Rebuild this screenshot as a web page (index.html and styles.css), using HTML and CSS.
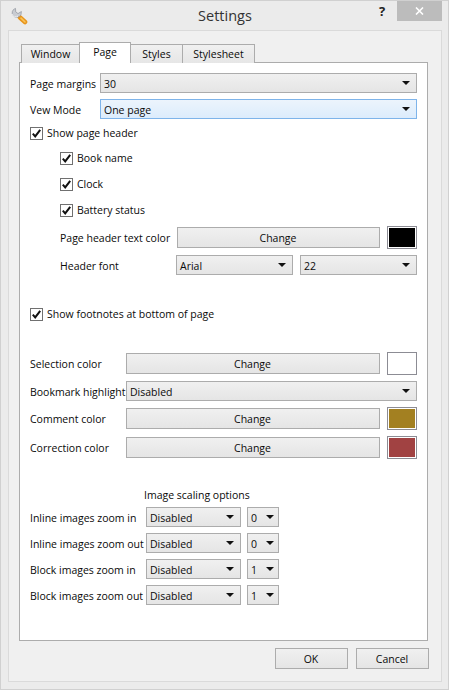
FILE: index.html
```html
<!DOCTYPE html>
<html lang="en">
<head>
<meta charset="utf-8">
<title>Settings</title>
<link rel="stylesheet" href="styles.css">
</head>
<body>
<div class="window">
  <header class="titlebar">
    <svg class="app-icon" width="18" height="18" viewBox="0 0 18 18">
      <path d="M10 10.5 L15 15" stroke="#e8951c" stroke-width="4.6" stroke-linecap="round"/>
      <path d="M11 11.2 L15 15" stroke="#f9c45a" stroke-width="1.6" stroke-linecap="round"/>
      <path d="M5.5 1.4 A4.6 4.6 0 1 0 11 7.6 L11.4 4.5 L8 6.6 L5.7 4.8 Z" fill="#c9ccd2" stroke="#8f949c" stroke-width=".7"/>
      <path d="M2.3 7.2 A3.4 3.4 0 0 0 8 9" fill="none" stroke="#f4f5f7" stroke-width="1"/>
    </svg>
    <div class="title">Settings</div>
    <div class="help">?</div>
    <div class="close">
      <svg width="9" height="8" viewBox="0 0 9 8"><path d="M1 .5 L8 7.5 M8 .5 L1 7.5" stroke="#fff" stroke-width="1.6"/></svg>
    </div>
  </header>
  <main class="frame">
    <nav class="tabs">
      <div class="tab tab-window">Window</div>
      <div class="tab tab-page active">Page</div>
      <div class="tab tab-styles">Styles</div>
      <div class="tab tab-sheet">Stylesheet</div>
    </nav>
    <section class="pane">
      <div class="row row-first">
        <label class="lbl lbl-top">Page margins</label>
        <div class="select grow"><span>30</span><i class="arrow"></i></div>
      </div>
      <div class="row row-view">
        <label class="lbl lbl-top">Vew Mode</label>
        <div class="select grow focus"><span>One page</span><i class="arrow"></i></div>
      </div>

      <div class="check check-main"><span class="box"><svg width="11" height="11" viewBox="0 0 11 11"><path d="M1.8 5.6 L4.2 8.4 L9.2 1.8" fill="none" stroke="#111" stroke-width="2"/></svg></span><span class="cap">Show page header</span></div>
      <div class="check check-sub first"><span class="box"><svg width="11" height="11" viewBox="0 0 11 11"><path d="M1.8 5.6 L4.2 8.4 L9.2 1.8" fill="none" stroke="#111" stroke-width="2"/></svg></span><span class="cap">Book name</span></div>
      <div class="check check-sub"><span class="box"><svg width="11" height="11" viewBox="0 0 11 11"><path d="M1.8 5.6 L4.2 8.4 L9.2 1.8" fill="none" stroke="#111" stroke-width="2"/></svg></span><span class="cap">Clock</span></div>
      <div class="check check-sub"><span class="box"><svg width="11" height="11" viewBox="0 0 11 11"><path d="M1.8 5.6 L4.2 8.4 L9.2 1.8" fill="none" stroke="#111" stroke-width="2"/></svg></span><span class="cap">Battery status</span></div>

      <div class="row color-row header-color">
        <label class="lbl lbl-sub">Page header text color</label>
        <div class="button grow">Change</div>
        <div class="swatch"><b class="black"></b></div>
      </div>
      <div class="row font-row">
        <label class="lbl lbl-font">Header font</label>
        <div class="select font-sel"><span>Arial</span><i class="arrow"></i></div>
        <div class="select font-sel"><span>22</span><i class="arrow"></i></div>
      </div>

      <div class="check check-main footnotes"><span class="box"><svg width="11" height="11" viewBox="0 0 11 11"><path d="M1.8 5.6 L4.2 8.4 L9.2 1.8" fill="none" stroke="#111" stroke-width="2"/></svg></span><span class="cap">Show footnotes at bottom of page</span></div>

      <div class="row color-row selection">
        <label class="lbl lbl-color">Selection color</label>
        <div class="button grow">Change</div>
        <div class="swatch"><b class="white"></b></div>
      </div>
      <div class="row bookmark">
        <label class="lbl lbl-color">Bookmark highlight</label>
        <div class="select grow"><span>Disabled</span><i class="arrow"></i></div>
      </div>
      <div class="row color-row comment">
        <label class="lbl lbl-color">Comment color</label>
        <div class="button grow">Change</div>
        <div class="swatch"><b class="gold"></b></div>
      </div>
      <div class="row color-row correction">
        <label class="lbl lbl-color">Correction color</label>
        <div class="button grow">Change</div>
        <div class="swatch"><b class="red"></b></div>
      </div>

      <div class="scaling-title">Image scaling options</div>
      <div class="row scale-row scale-first">
        <label class="lbl lbl-scale">Inline images zoom in</label>
        <div class="select sel-mode"><span>Disabled</span><i class="arrow"></i></div>
        <div class="select sel-num"><span>0</span><i class="arrow"></i></div>
      </div>
      <div class="row scale-row">
        <label class="lbl lbl-scale">Inline images zoom out</label>
        <div class="select sel-mode"><span>Disabled</span><i class="arrow"></i></div>
        <div class="select sel-num"><span>0</span><i class="arrow"></i></div>
      </div>
      <div class="row scale-row">
        <label class="lbl lbl-scale">Block images zoom in</label>
        <div class="select sel-mode"><span>Disabled</span><i class="arrow"></i></div>
        <div class="select sel-num"><span>1</span><i class="arrow"></i></div>
      </div>
      <div class="row scale-row">
        <label class="lbl lbl-scale">Block images zoom out</label>
        <div class="select sel-mode"><span>Disabled</span><i class="arrow"></i></div>
        <div class="select sel-num"><span>1</span><i class="arrow"></i></div>
      </div>
    </section>
    <footer class="actions">
      <div class="button action">OK</div>
      <div class="button action">Cancel</div>
    </footer>
  </main>
</div>
</body>
</html>
```
FILE: styles.css
```css
* { box-sizing: border-box; }
html, body { margin: 0; padding: 0; }
body {
  width: 449px;
  height: 690px;
  overflow: hidden;
  font-family: "Open Sans", "Noto Sans", sans-serif;
  font-size: 10.5px;
  color: #0a0a0a;
}
.window {
  width: 449px;
  height: 690px;
  background: #ebebeb;
  border: 1px solid #d0d0d0;
  display: flex;
  flex-direction: column;
  padding: 0 6px 7px 7px;
}
.titlebar {
  height: 29px;
  flex: none;
  display: flex;
  align-items: flex-start;
  position: relative;
}
.app-icon { margin: 6px 0 0 2px; flex: none; }
.title {
  flex: 1;
  text-align: center;
  font-size: 14.5px;
  line-height: 20px;
  margin: 5px 0 0 0;
  color: #333;
  padding-left: 47px;
}
.help {
  width: 14px;
  font-weight: 700;
  font-size: 13px;
  line-height: 14px;
  margin: 3px 8px 0 0;
  text-align: center;
  color: #222;
}
.close {
  width: 45px;
  height: 20px;
  background: #bcbcbc;
  display: flex;
  align-items: center;
  justify-content: center;
}
.frame {
  flex: 1;
  background: #f0f0f0;
  border: 1px solid #dadada;
  padding: 11px 13px 0 10px;
  display: flex;
  flex-direction: column;
}
.tabs {
  display: flex;
  align-items: flex-end;
  height: 21px;
  padding-left: 2px;
  flex: none;
  margin-bottom: -1px;
  position: relative;
  z-index: 1;
}
.tab {
  height: 19px;
  background: linear-gradient(#f0f0f0, #e6e6e6);
  border: 1px solid #acacac;
  border-bottom: 0;
  text-align: center;
  line-height: 18px;
  margin-left: -1px;
}
.tab-window { width: 59px; margin-left: 0; }
.tab-page { width: 52px; }
.tab-styles { width: 53px; }
.tab-sheet { width: 73px; }
.tab.active {
  height: 21px;
  background: #fff;
  line-height: 19px;
  position: relative;
  z-index: 1;
}
.pane {
  height: 579px;
  flex: none;
  width: 409px;
  background: #fff;
  border: 1px solid #acacac;
  padding: 10px 10px 0 10px;
  display: flex;
  flex-direction: column;
}
.row { display: flex; align-items: center; height: 20px; flex: none; }
.row-view { margin-top: 6px; }
.grow { flex: 1; }
.lbl { white-space: nowrap; flex: none; padding-top: 1px; }
.lbl-top { width: 70px; }
.lbl-sub { width: 117px; margin-left: 30px; }
.lbl-font { width: 116px; margin-left: 30px; }
.lbl-color { width: 96px; }
.lbl-scale { width: 116px; }

.select {
  height: 20px;
  background: linear-gradient(#f0f0f0, #e5e5e5);
  border: 1px solid #acacac;
  display: flex;
  align-items: center;
  justify-content: space-between;
  padding: 1px 6px 0 3px;
  flex-shrink: 0;
}
.select.grow { flex: 1; }
.select.focus {
  background: linear-gradient(#ecf4fc, #dcecfc);
  border-color: #7eb4ea;
}
.arrow {
  width: 0;
  height: 0;
  border-left: 4px solid transparent;
  border-right: 4px solid transparent;
  border-top: 4px solid #111;
  flex: none;
  margin-top: -1px;
}
.button {
  height: 21px;
  background: linear-gradient(#f0f0f0, #e5e5e5);
  border: 1px solid #acacac;
  text-align: center;
  line-height: 20px;
  padding-right: 1px;
}
.swatch {
  width: 30px;
  height: 23px;
  margin-left: 7px;
  flex: none;
  border: 1px solid #8c8c94;
  padding: 1px;
  background: #fff;
  display: flex;
}
.swatch b { flex: 1; display: block; }
.black { background: #000; }
.white { background: #fff; }
.gold { background: #a38021; }
.red { background: #a14242; }

.check { display: flex; align-items: center; height: 13px; flex: none; line-height: 13px; }
.box {
  width: 13px;
  height: 13px;
  border: 1px solid #707070;
  background: #fff;
  margin-right: 4px;
  display: flex;
  align-items: center;
  justify-content: center;
  flex: none;
}
.check-main { margin-top: 8px; }
.check-sub { margin-left: 30px; margin-top: 13px; }
.check-sub.first { margin-top: 12px; }
.header-color { margin-top: 9px; height: 23px; }
.font-row { margin-top: 6px; }
.lbl-font + .select { margin-right: 7px; }
.font-sel { width: 117px; }
.footnotes { margin-top: 33px; }
.selection { margin-top: 31px; height: 23px; }
.bookmark { margin-top: 6px; }
.comment { margin-top: 6px; height: 23px; }
.correction { margin-top: 6px; height: 23px; }
.scaling-title { margin: 28px 0 0 114px; height: 16px; line-height: 16px; flex: none; }
.scale-row { margin-top: 6px; }
.scale-first.scale-row { margin-top: 4px; }
.sel-mode { width: 95px; margin-right: 6px; }
.sel-num { width: 32px; padding-right: 4px; }
.actions {
  display: flex;
  justify-content: flex-end;
  gap: 8px;
  margin-top: 7px;
  width: 410px;
}
.action { width: 73px; height: 21px; }
```
